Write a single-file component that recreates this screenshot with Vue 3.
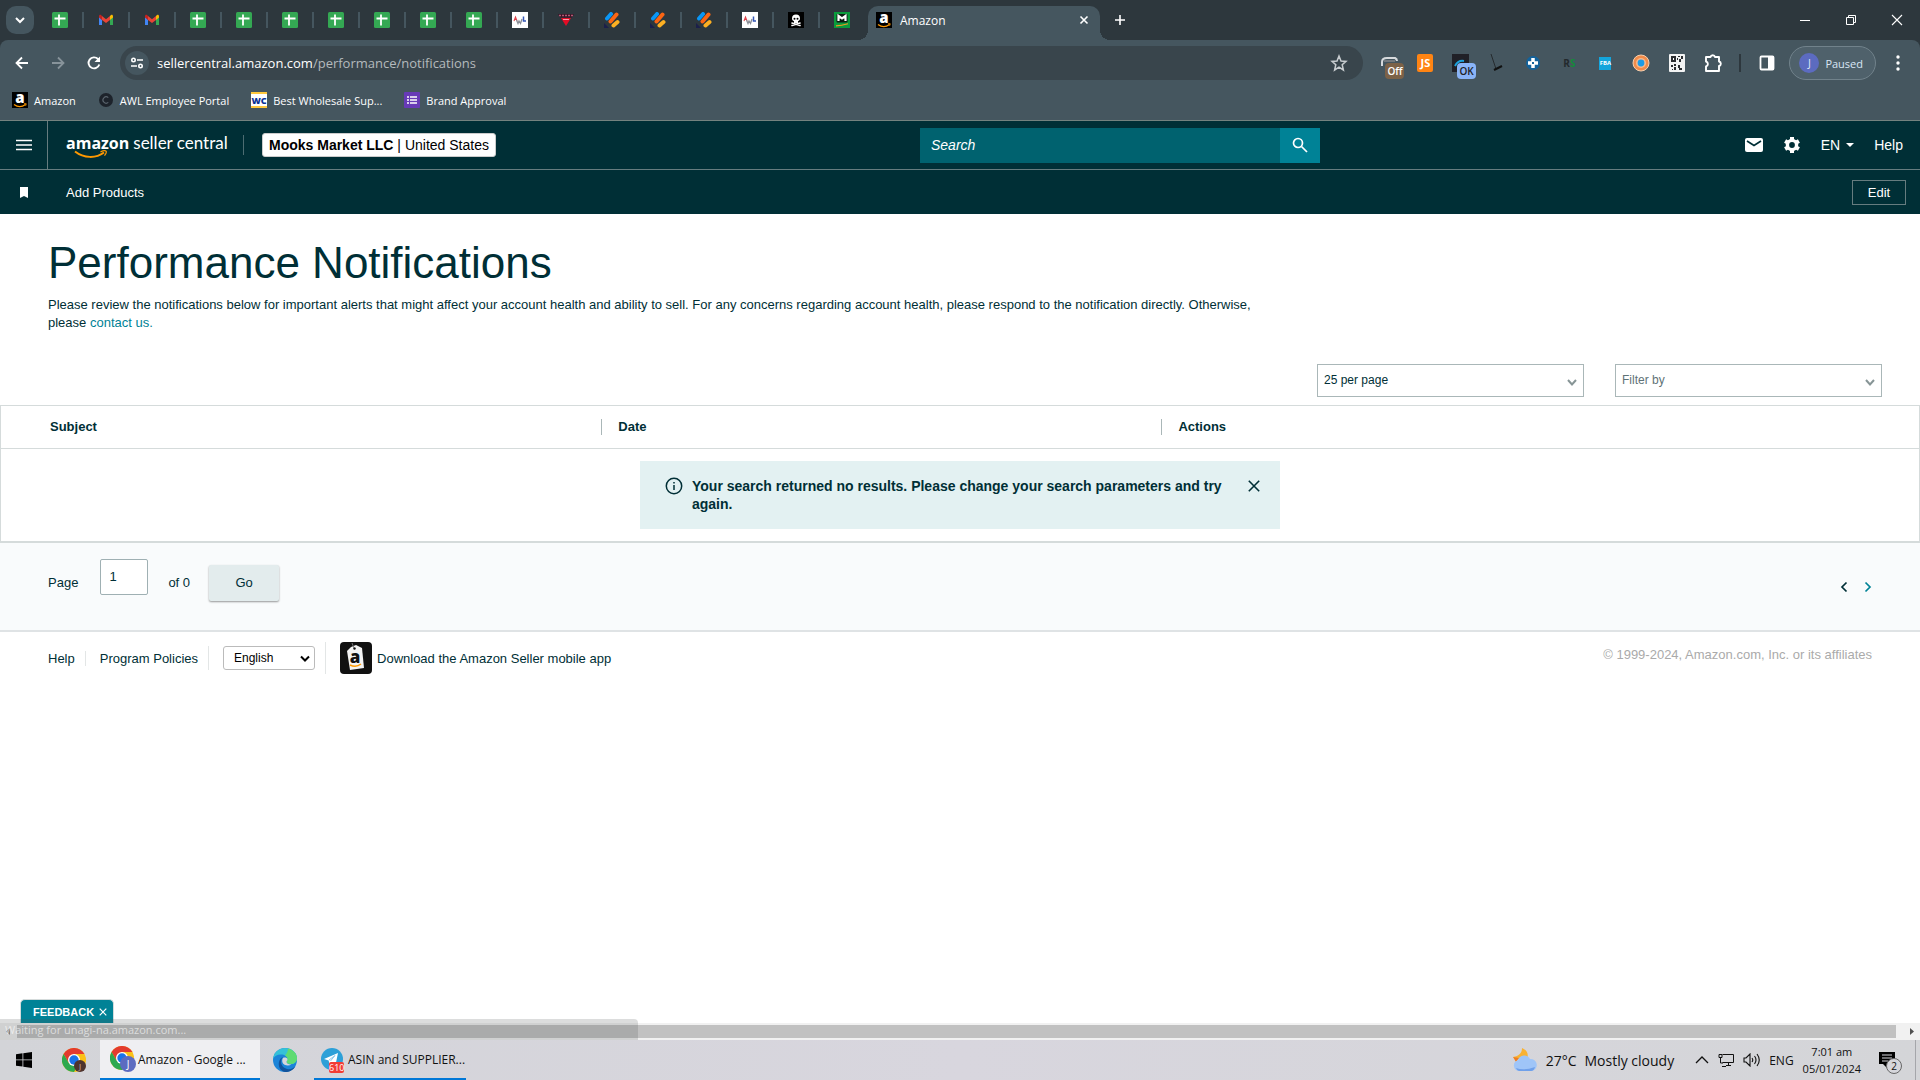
<template>
  <div class="screen">
    <!-- shared icon shapes -->
    <svg class="icon-defs" aria-hidden="true">
      <symbol id="i-sheet" viewBox="0 0 16 16">
        <rect width="16" height="16" rx="1.5" fill="#34a853" />
        <path d="M2.5 6.5h11M7 2.5v11" stroke="#fff" stroke-width="1.8" />
      </symbol>
      <symbol id="i-gmail" viewBox="0 0 16 16">
        <path d="M1 4.5V13h3V7.5z" fill="#4285f4" />
        <path d="M15 4.5V13h-3V7.5z" fill="#34a853" />
        <path d="M12 4l1-1c1-.7 2 0 2 1.200v1.300l-3 2.500z" fill="#fbbc04" />
        <path d="M4 4l4 3.200L12 4v4l-4 3-4-3z" fill="#ea4335" />
        <path d="M4 4L3 3C2 2.300 1 3 1 4.200v1.300L4 8z" fill="#c5221f" />
      </symbol>
      <symbol id="i-awl" viewBox="0 0 16 16">
        <rect width="16" height="16" fill="#fff" />
        <path d="M2 9l1.500-4L5 9M3 7.500h2" fill="none" stroke="#e0444c" stroke-width="1.100" />
        <path d="M4.500 8l1.500 3.500L7 9l1.500 2.500L10 7" fill="none" stroke="#8a8f98" stroke-width="1.300" />
        <path d="M11.500 4.500V9h2.500" fill="none" stroke="#3557b7" stroke-width="1.500" />
      </symbol>
      <symbol id="i-red" viewBox="0 0 16 16">
        <path d="M0 2h16l-2 3.500H2z" fill="#3b1426" />
        <path d="M1 3.500h14" stroke="#b05a73" stroke-width="1.300" stroke-dasharray="2 1" />
        <path d="M3 6h10l-5 8z" fill="#e30d26" />
        <path d="M5 7.500h6" stroke="#ff9cab" stroke-width="1" />
      </symbol>
      <symbol id="i-bars" viewBox="0 0 16 16">
        <path d="M0 11l5 5H0z" fill="#1b1f4b" />
        <g fill="none" stroke-linecap="round" stroke-width="4">
          <path d="M3 6.500L7 2" stroke="#0a96f5" />
          <path d="M6.500 9.500l6-7" stroke="#fb6514" />
          <path d="M9.500 13.500l4-3.500" stroke="#fdb022" />
        </g>
      </symbol>
      <symbol id="i-skull" viewBox="0 0 16 16">
        <rect width="16" height="16" fill="#000" />
        <path d="M4 11l8 2.500M12 11l-8 2.500" stroke="#fff" stroke-width="1.600" stroke-linecap="round" />
        <path d="M8 2.500a4 4 0 0 0-4 4c0 1.500.8 2.200 2 2.700V11h4V9.200c1.200-.5 2-1.200 2-2.700a4 4 0 0 0-4-4z" fill="#fff" />
        <circle cx="6.500" cy="6.800" r="1" /><circle cx="9.500" cy="6.800" r="1" />
      </symbol>
      <symbol id="i-m" viewBox="0 0 16 16">
        <rect width="16" height="16" fill="#0a9b3c" />
        <rect x="2.500" y="2" width="11" height="8.500" rx="1" fill="#0b1d12" />
        <path d="M4.500 9V4L8 6.500 11.500 4v5" fill="none" stroke="#fff" stroke-width="2.200" />
        <path d="M2 13.800c4 0 8-.8 12-2" fill="none" stroke="#f39a1f" stroke-width="1.200" />
      </symbol>
      <symbol id="i-amazon" viewBox="0 0 16 16">
        <rect width="16" height="16" fill="#000" />
        <text x="8" y="11" text-anchor="middle" font-family="Open Sans, sans-serif" font-weight="800" font-size="15" fill="#fff">a</text>
        <path d="M2 12.500c3.500 2.500 8 2.500 11.500 0" fill="none" stroke="#f90" stroke-width="1.300" />
        <path d="M12 11.800l2.200-.1-.5 2" fill="none" stroke="#f90" stroke-width=".9" />
      </symbol>
      <symbol id="i-portal" viewBox="0 0 16 16">
        <circle cx="8" cy="8" r="7" fill="#1d232b" />
        <path d="M10.300 5.600a3.200 3.200 0 1 0 0 4.800" fill="none" stroke="#5a646d" stroke-width="1.100" />
      </symbol>
      <symbol id="i-wc" viewBox="0 0 16 16">
        <rect width="16" height="16" fill="#fff" />
        <path d="M0 0h16v2H0zM0 14h16v2H0z" fill="#ffc83d" />
        <text x="8" y="11.500" text-anchor="middle" font-family="Open Sans, sans-serif" font-weight="800" font-size="9" fill="#0a3296">WC</text>
      </symbol>
      <symbol id="i-form" viewBox="0 0 16 16">
        <rect width="16" height="16" rx="1" fill="#673ab7" />
        <path d="M3 5h2M3 8h2M3 11h2M6 5h7M6 8h7M6 11h7" stroke="#fff" stroke-width="1.600" />
      </symbol>
      <symbol id="i-chrome" viewBox="0 0 24 24">
        <circle cx="12" cy="12" r="12" fill="#fbc116" />
        <path d="M1.600 6A12 12 0 0 1 22.400 6H12L6.800 15z" fill="#e33b2e" />
        <path d="M1.600 6A12 12 0 0 0 12 24l5.200-9H6.800z" fill="#2da94f" />
        <circle cx="12" cy="12" r="6" fill="#fff" />
        <circle cx="12" cy="12" r="4.700" fill="#1a73e8" />
      </symbol>
      <symbol id="i-chevron" viewBox="0 0 12 12">
        <path d="M2 4l4 4.500L10 4" fill="none" stroke="#879596" stroke-width="2" />
      </symbol>
    </svg>

    <!-- tab strip -->
    <div class="tab-strip">
      <button class="tab-search" aria-label="Search tabs">
        <svg width="12" height="12" viewBox="0 0 12 12"><path d="M2 4l4 4 4-4" fill="none" stroke="#fff" stroke-width="2" /></svg>
      </button>
      <div class="tabs">
        <button v-for="(tab, i) in tabs" :key="i" class="tab" :aria-label="'Tab ' + (i + 1)">
          <svg width="16" height="16"><use :href="'#i-' + tab" /></svg>
        </button>
      </div>
      <div class="tab-active">
        <svg width="16" height="16"><use href="#i-amazon" /></svg>
        <span class="tab-title">Amazon</span>
        <button class="plain" aria-label="Close tab">
          <svg width="10" height="10" viewBox="0 0 10 10"><path d="M1.500 1.500l7 7M8.500 1.500l-7 7" stroke="#fff" stroke-width="1.600" /></svg>
        </button>
      </div>
      <button class="plain new-tab" aria-label="New tab">
        <svg width="12" height="12" viewBox="0 0 12 12"><path d="M6 1v10M1 6h10" stroke="#fff" stroke-width="1.600" /></svg>
      </button>
      <div class="window-buttons">
        <button class="plain" aria-label="Minimize">
          <svg width="12" height="12" viewBox="0 0 12 12"><path d="M1 6.500h10" stroke="#fff" /></svg>
        </button>
        <button class="plain" aria-label="Restore">
          <svg width="12" height="12" viewBox="0 0 12 12"><path d="M1.500 3.500h7v7h-7zM3.500 3V1.500h7v7H9" fill="none" stroke="#fff" /></svg>
        </button>
        <button class="plain" aria-label="Close">
          <svg width="12" height="12" viewBox="0 0 12 12"><path d="M1 1l10 10M11 1L1 11" stroke="#fff" stroke-width="1.100" /></svg>
        </button>
      </div>
    </div>

    <div class="browser-bar">
      <div class="toolbar">
        <div class="nav-buttons">
          <button class="plain" aria-label="Back">
            <svg width="16" height="16" viewBox="0 0 16 16"><path d="M14 8H3M8 2.500L2.500 8 8 13.500" fill="none" stroke="#fff" stroke-width="1.800" /></svg>
          </button>
          <button class="plain" aria-label="Forward">
            <svg width="16" height="16" viewBox="0 0 16 16"><path d="M2 8h11M8 2.500L13.500 8 8 13.500" fill="none" stroke="#87939a" stroke-width="1.800" /></svg>
          </button>
          <button class="plain" aria-label="Reload">
            <svg width="16" height="16" viewBox="0 0 16 16"><path d="M13.300 9.500A5.500 5.500 0 1 1 12 4l1.500 1.600" fill="none" stroke="#fff" stroke-width="1.900" /><path d="M14 1.500v5.500H8.500z" fill="#fff" /></svg>
          </button>
        </div>
        <div class="omnibox">
          <span class="site-info">
            <svg width="14" height="14" viewBox="0 0 14 14" fill="none" stroke="#fff" stroke-width="1.600"><circle cx="3.500" cy="4" r="1.700" /><path d="M7 4h6M1 10h6" /><circle cx="10.500" cy="10" r="1.700" /></svg>
          </span>
          <span class="url"><b>sellercentral.amazon.com</b>/performance/notifications</span>
          <button class="plain" aria-label="Bookmark this tab">
            <svg width="18" height="18" viewBox="0 0 18 18"><path d="M9 2l2 5 5 .4-3.800 3.300L13.400 16 9 13.100 4.600 16l1.200-5.300L2 7.400 7 7z" fill="none" stroke="#c8cdd0" stroke-width="1.500" /></svg>
          </button>
        </div>
        <div class="extensions">
          <span class="ext">
            <svg width="18" height="18" viewBox="0 0 18 18"><path d="M2 12V8q0-4 5-4h8q2 1 2 3" fill="none" stroke="#d7dadd" stroke-width="2" /><path d="M4 7h11" stroke="#73797e" stroke-width="2" /></svg>
            <span class="ext-badge off">Off</span>
          </span>
          <span class="ext"><span class="js">JS</span></span>
          <span class="ext">
            <svg width="18" height="18" viewBox="0 0 18 18"><path d="M0 0h17v18H0z" fill="#202027" /><path d="M3 12q3-6 9-5" fill="none" stroke="#1ba2dc" stroke-width="2" /></svg>
            <span class="ext-badge ok">OK</span>
          </span>
          <span class="ext"><svg width="18" height="18" viewBox="0 0 18 18"><path d="M3 0l5 15" stroke="#252a2e" /><path d="M6 16l8-4" stroke="#111" stroke-width="2" /></svg></span>
          <span class="ext"><svg width="18" height="18" viewBox="0 0 18 18"><circle cx="9" cy="9" r="7" fill="#13629b" /><path d="M9 4v10M4 9h10" stroke="#fff" stroke-width="3.500" /><path d="M9 8v2" stroke="#13629b" stroke-width="2" /></svg></span>
          <span class="ext rs">R<i>S</i></span>
          <span class="ext"><span class="fba">FBA</span></span>
          <span class="ext"><svg width="18" height="18" viewBox="0 0 18 18"><circle cx="9" cy="9" r="8" fill="#f28c4a" stroke="#f6cfae" /><circle cx="9" cy="9" r="5" fill="#f7b98d" /><circle cx="9" cy="9" r="3.400" fill="#1d9be5" /></svg></span>
          <span class="ext">
            <svg width="16" height="18" viewBox="0 0 16 18"><rect width="16" height="18" rx="1" fill="#f2f3f3" /><path d="M2 2h5v6H2zM9 2h2v1H9zM12 2h2v3h-2zM2 11h2v2H2zM5 10h2v2H5zM5 13h2v3H5zM10 5h2v3h-2zM9 11h2v3h2v2h-3v-2H9zM3 15h1v1H3zM8 4h1v2H8z" fill="#2a2d30" /><path d="M4 4h1v2H4z" fill="#fff" /></svg>
          </span>
          <button class="plain ext" aria-label="Extensions">
            <svg width="18" height="20" viewBox="0 0 18 20"><path d="M2 4h4.500a2.300 2.300 0 0 1 4.500 0h4v4.500a2.300 2.300 0 0 1 0 4.500v5H2v-4.500a2.600 2.600 0 0 0 0-5z" fill="none" stroke="#fff" stroke-width="1.900" stroke-linejoin="round" /></svg>
          </button>
        </div>
        <button class="plain side-panel" aria-label="Side panel">
          <svg width="16" height="16" viewBox="0 0 16 16"><rect x="1.500" y="1.500" width="13" height="13" rx="1" fill="none" stroke="#fff" stroke-width="1.800" /><path d="M9 1h6v14H9z" fill="#fff" /></svg>
        </button>
        <button class="profile"><span>J</span>Paused</button>
        <button class="plain menu" aria-label="Menu">
          <svg width="4" height="16" viewBox="0 0 4 16" fill="#fff"><circle cx="2" cy="2" r="1.700" /><circle cx="2" cy="8" r="1.700" /><circle cx="2" cy="14" r="1.700" /></svg>
        </button>
      </div>
      <div class="bookmarks">
        <a v-for="b in bookmarks" :key="b.name" href="#">
          <svg width="16" height="16"><use :href="'#i-' + b.icon" /></svg>{{ b.name }}
        </a>
      </div>
    </div>

    <!-- page -->
    <div class="page">
      <header class="top-bar">
        <button class="plain burger" aria-label="Open menu">
          <svg width="16" height="12" viewBox="0 0 16 12"><path d="M0 1.500h16M0 6h16M0 10.500h16" stroke="#fff" stroke-width="1.600" /></svg>
        </button>
        <a href="#" class="logo">
          <b>amazon</b><span>seller central</span>
          <svg class="smile" width="34" height="10" viewBox="0 0 34 10"><path d="M1 1.500c9 7 21 7 29 1" fill="none" stroke="#f90" stroke-width="2" /><path d="M26.500 1.800c3-1.300 5-1.200 5.500-.6s-.2 2.800-1.500 4.400" fill="none" stroke="#f90" stroke-width="1.300" /></svg>
        </a>
        <button class="account"><b>Mooks Market LLC</b> | United States</button>
        <form class="search" @submit.prevent>
          <input v-model="query" type="search" placeholder="Search" aria-label="Search" />
          <button aria-label="Submit search">
            <svg width="18" height="18" viewBox="0 0 18 18" fill="none" stroke="#fff" stroke-width="1.700"><circle cx="7" cy="7" r="4.500" /><path d="M10.500 10.500l5.500 5.500" /></svg>
          </button>
        </form>
        <nav class="top-links">
          <a href="#" aria-label="Messages">
            <svg width="18" height="16" viewBox="0 0 18 16"><rect y="1" width="18" height="14" rx="2" fill="#fff" /><path d="M2 4l7 4.500L16 4" fill="none" stroke="#002f36" stroke-width="1.700" /></svg>
          </a>
          <a href="#" aria-label="Settings">
            <svg width="18" height="18" viewBox="0 0 18 18"><path d="M9 1v16M2.100 5l13.800 8M15.900 5L2.100 13" stroke="#fff" stroke-width="4" /><circle cx="9" cy="9" r="4.500" fill="none" stroke="#fff" stroke-width="3.500" /><circle cx="9" cy="9" r="2.900" fill="#002f36" /></svg>
          </a>
          <button class="plain lang">EN<svg width="8" height="4" viewBox="0 0 8 4"><path d="M0 0h8L4 4z" fill="#fff" /></svg></button>
          <a href="#">Help</a>
        </nav>
      </header>
      <div class="favorites">
        <svg class="flag" width="8" height="11" viewBox="0 0 8 11"><path d="M0 0h8v11L4 9l-4 2z" fill="#fff" /></svg>
        <a href="#">Add Products</a>
        <button class="edit">Edit</button>
      </div>

      <main>
        <section class="intro">
          <h1>Performance Notifications</h1>
          <p>Please review the notifications below for important alerts that might affect your account health and ability to sell. For any concerns regarding account health, please respond to the notification directly. Otherwise, please <a href="#">contact us.</a></p>
        </section>

        <div class="filters">
          <div class="select-box">
            <select v-model="perPage" aria-label="Results per page">
              <option value="25">25 per page</option>
              <option value="50">50 per page</option>
            </select>
            <svg width="12" height="12"><use href="#i-chevron" /></svg>
          </div>
          <div class="select-box muted">
            <select v-model="filterBy" aria-label="Filter by">
              <option value="">Filter by</option>
            </select>
            <svg width="12" height="12"><use href="#i-chevron" /></svg>
          </div>
        </div>

        <table>
          <thead>
            <tr>
              <th v-for="c in columns" :key="c"><span>{{ c }}</span></th>
            </tr>
          </thead>
          <tbody>
            <tr>
              <td colspan="3">
                <div v-if="showAlert" class="alert" role="status">
                  <svg width="18" height="18" viewBox="0 0 18 18"><circle cx="9" cy="9" r="7.700" fill="none" stroke="#002f36" stroke-width="1.500" /><path d="M9 8v5M9 5v1.500" stroke="#002f36" stroke-width="1.500" /></svg>
                  <p>Your search returned no results. Please change your search parameters and try again.</p>
                  <button class="plain" aria-label="Dismiss" @click="showAlert = false">
                    <svg width="12" height="12" viewBox="0 0 12 12"><path d="M.8.8l10.400 10.400M11.200.8L.8 11.200" stroke="#002f36" stroke-width="1.600" /></svg>
                  </button>
                </div>
              </td>
            </tr>
          </tbody>
        </table>

        <form class="pager" @submit.prevent>
          <label for="page-no">Page</label>
          <input id="page-no" v-model="pageNo" type="text" />
          <span class="total">of 0</span>
          <button class="go">Go</button>
          <div class="arrows">
            <button type="button" class="plain" aria-label="Previous page">
              <svg width="8" height="12" viewBox="0 0 8 12"><path d="M6.500 1.500L2 6l4.500 4.500" fill="none" stroke="#002f36" stroke-width="1.700" /></svg>
            </button>
            <button type="button" class="plain" aria-label="Next page">
              <svg width="8" height="12" viewBox="0 0 8 12"><path d="M1.500 1.500L6 6l-4.500 4.500" fill="none" stroke="#008296" stroke-width="1.700" /></svg>
            </button>
          </div>
        </form>
      </main>

      <footer>
        <a href="#">Help</a>
        <a href="#">Program Policies</a>
        <span class="lang-cell">
          <select v-model="language" aria-label="Language"><option>English</option></select>
          <svg width="10" height="8" viewBox="0 0 10 8"><path d="M1 1.500l4 4 4-4" fill="none" stroke="#000" stroke-width="2" /></svg>
        </span>
        <a href="#" class="app-link">
          <svg width="32" height="32" viewBox="0 0 32 32">
            <rect width="32" height="32" rx="4" fill="#111" />
            <path d="M11 5l5-2 6 3 2 20-14 2-3-19z" fill="#f4f4f4" />
            <circle cx="14.500" cy="6.500" r="1.200" fill="#111" />
            <path d="M14 6l-2-5" stroke="#777" />
            <text x="15" y="21" text-anchor="middle" font-family="Open Sans, sans-serif" font-weight="800" font-size="17" fill="#111">a</text>
            <path d="M10 23q6 3 11-1" fill="none" stroke="#f90" stroke-width="1.500" />
          </svg>
          Download the Amazon Seller mobile app
        </a>
        <span class="copyright">© 1999-2024, Amazon.com, Inc. or its affiliates</span>
      </footer>

      <button class="feedback">FEEDBACK
        <svg width="8" height="8" viewBox="0 0 8 8"><path d="M.7.7l6.600 6.600M7.300.7L.7 7.300" stroke="#fff" stroke-width="1.200" /></svg>
      </button>
      <div class="status">Waiting for unagi-na.amazon.com...</div>
    </div>
    <div class="scrollbar">
      <svg width="17" height="17" viewBox="0 0 17 17"><path d="M10 5v7L6 8.500z" fill="#8b8b8b" /></svg>
      <div class="thumb"></div>
      <svg width="17" height="17" viewBox="0 0 17 17"><path d="M7 5v7l4-3.500z" fill="#505050" /></svg>
    </div>

    <!-- taskbar -->
    <div class="taskbar">
      <button class="plain start" aria-label="Start">
        <svg width="16" height="16" viewBox="0 0 16 16"><path d="M0 2.200l6.500-.9v6.200H0zM7.300 1.200L16 0v7.500H7.300zM0 8.300h6.500v6.300L0 13.700zM7.300 8.300H16V16l-8.700-1.200z" /></svg>
      </button>
      <button class="plain app-icon" aria-label="Google Chrome">
        <svg width="24" height="24" viewBox="0 0 24 24"><use href="#i-chrome" width="24" height="24" /><circle cx="18" cy="18" r="6" fill="#4e342e" /><text x="18" y="21" text-anchor="middle" font-family="Open Sans, sans-serif" font-size="8" fill="#d3b8ae">J</text></svg>
      </button>
      <button class="task current">
        <svg width="26" height="26" viewBox="0 0 26 26"><use href="#i-chrome" width="24" height="24" /><circle cx="18" cy="18" r="8" fill="#5c6bc0" /><text x="18" y="22" text-anchor="middle" font-family="Open Sans, sans-serif" font-size="10" fill="#fff">J</text></svg>
        Amazon - Google ...
      </button>
      <button class="plain app-icon edge" aria-label="Microsoft Edge">
        <svg width="24" height="24" viewBox="0 0 24 24">
          <circle cx="12" cy="12" r="12" fill="#1b84d8" />
          <path d="M0 11C1 4 6 0 12 0c7 0 12 5 12 10 0 4-3 6-6 6-3 0-4.500-1-4.500-2s1-1.500 1-3c0-2.500-3-4.500-6.500-4.500-4 0-7 2-8 4.500z" fill="#35c1d8" />
          <path d="M15 .500c5.500 1.300 9 5.300 9 9.500 0 4-3 6-6 6-3 0-4.500-1-4.500-2s1-1.500 1-3c0-1.500-.9-2.900-2.500-3.600C14 5 15 3 15 .500z" fill="#5fdb72" />
          <path d="M10 9c-3 3-3 10 4 12 3.500.8 6.500-.5 8.500-3-2 4-6 6-10.500 6C7 23 5 18 6 14c.6-2.500 2-4.200 4-5z" fill="#12539c" />
          <path d="M10 10c1.500-1 4.500-.5 4.500 1.500 0 1.200-1 1.500-1 2.500s1.500 2.500 5 2.500c-3 2-8 1-9-2-.5-1.500-.3-3.500.5-4.500z" fill="#d6d5dc" />
        </svg>
      </button>
      <button class="task telegram">
        <span class="tg">
          <svg width="24" height="24" viewBox="0 0 24 24"><circle cx="12" cy="12" r="11" fill="#2da0d8" /><path d="M4 12L18 6l-2.500 12-4.200-3-2 2-.6-3.600z" fill="#fff" /><path d="M9 13l6-4.500-4.500 5.500" fill="none" stroke="#8fc9ea" /></svg>
          <i>610</i>
        </span>
        ASIN and SUPPLIER...
      </button>
      <div class="tray">
        <span class="weather">
          <svg width="26" height="26" viewBox="0 0 26 26">
            <path d="M10 1c5 2 7 6 5 11H6c-2 0-4-1-5-2 6-1 9-4 9-9z" fill="#f9b233" />
            <path d="M1 10l6 1-3 4z" fill="#ef7d22" />
            <path d="M7 24a5.500 5.500 0 0 1-1-10.800 6.500 6.500 0 0 1 12-1.200 6 6 0 0 1 1.500 12z" fill="#9fc5f8" />
            <path d="M4 21q8 3 19-1-1 4-4 4H7q-2 0-3-3z" fill="#6fa0ea" />
          </svg>
          <span>27°C</span><span>Mostly cloudy</span>
        </span>
        <svg width="14" height="8" viewBox="0 0 14 8"><path d="M1 7l6-6 6 6" fill="none" stroke="#111" stroke-width="1.300" /></svg>
        <svg width="16" height="14" viewBox="0 0 16 14" fill="none" stroke="#111"><path d="M4.500 1.500h11v8h-11M8 12.500h5M10.500 10v3M1 1.500h3v3H1zM2.500 5v5H5M4 13.500h4" /></svg>
        <svg width="17" height="14" viewBox="0 0 17 14" fill="none" stroke="#111" stroke-width="1.100"><path d="M1 5h2l4-4v12L3 9H1zM9 5q1.500 2 0 4M11.500 3q3 4 0 8M14 1q4.500 6 0 12" /></svg>
        <span>ENG</span>
        <span class="clock">7:01 am<br />05/01/2024</span>
        <span class="notice">
          <svg width="16" height="16" viewBox="0 0 16 16"><path d="M0 0h16v12H8v4l-4-4H0z" /><path d="M3 3h10M3 6h10M3 9h6" stroke="#d6d6db" /></svg>
          <i>2</i>
        </span>
      </div>
    </div>
  </div>
</template>

<script setup>
import { ref } from 'vue';

const tabs = [
  'sheet', 'gmail', 'gmail',
  'sheet', 'sheet', 'sheet', 'sheet', 'sheet', 'sheet', 'sheet',
  'awl', 'red', 'bars', 'bars', 'bars', 'awl', 'skull', 'm'
];

const bookmarks = [
  { name: 'Amazon', icon: 'amazon' },
  { name: 'AWL Employee Portal', icon: 'portal' },
  { name: 'Best Wholesale Sup...', icon: 'wc' },
  { name: 'Brand Approval', icon: 'form' }
];

const columns = ['Subject', 'Date', 'Actions'];

const query = ref('');
const perPage = ref('25');
const filterBy = ref('');
const pageNo = ref('1');
const language = ref('English');
const showAlert = ref(true);
</script>

<style>
body {
  margin: 0;
}
</style>

<style scoped>
* {
  box-sizing: border-box;
}

.screen {
  display: flex;
  flex-direction: column;
  min-height: 100vh;
  background: #fff;
  font-family: "Open Sans", "Noto Sans", sans-serif;
  font-size: 12px;
  color: #fff;
}

svg {
  display: block;
  flex: none;
}

.icon-defs {
  display: none;
}

button, input, select {
  font-family: inherit;
  font-size: inherit;
  color: inherit;
  margin: 0;
}

a {
  color: inherit;
  text-decoration: none;
}

.plain {
  display: flex;
  align-items: center;
  justify-content: center;
  padding: 0;
  border: 0;
  background: none;
}

/* tabs */
.tab-strip {
  display: flex;
  align-items: center;
  height: 40px;
  padding-left: 6px;
  background: #2d373d;
}

.tab-search {
  display: flex;
  align-items: center;
  justify-content: center;
  width: 28px;
  height: 28px;
  padding: 0;
  border: 0;
  border-radius: 10px;
  background: #45565f;
}

.tabs {
  display: flex;
  margin: 0 2px 0 4px;
}

.tab {
  display: flex;
  justify-content: center;
  width: 46px;
  padding: 0;
  border: 0;
  border-right: 2px solid #45565f;
  background: none;
}

.tab:last-child {
  border-right-color: transparent;
}

.tab-active {
  position: relative;
  display: flex;
  align-items: center;
  align-self: flex-end;
  width: 232px;
  height: 34px;
  padding: 0 11px 6px 8px;
  border-radius: 10px 10px 0 0;
  background: #45565f;
}

.tab-active::before,
.tab-active::after {
  content: "";
  position: absolute;
  bottom: 0;
  width: 10px;
  height: 10px;
}

.tab-active::before {
  right: 100%;
  background: radial-gradient(circle at 0 0, transparent 10px, #45565f 10px);
}

.tab-active::after {
  left: 100%;
  background: radial-gradient(circle at 100% 0, transparent 10px, #45565f 10px);
}

.tab-title {
  flex: 1;
  margin-left: 8px;
}

.new-tab {
  width: 28px;
  height: 28px;
  margin-left: 6px;
}

.window-buttons {
  display: flex;
  margin-left: auto;
}

.window-buttons button {
  width: 46px;
  height: 40px;
}

/* toolbar */
.browser-bar {
  border-bottom: 1px solid #74827f;
  background: linear-gradient(#2d373d, #2d373d) top / 100% 10px no-repeat, #45565f;
}

.toolbar {
  display: flex;
  align-items: center;
  height: 46px;
  padding: 6px 20px 6px 14px;
  border-radius: 8px 8px 0 0;
  background: #45565f;
}

.nav-buttons {
  display: flex;
  gap: 20px;
  margin-right: 18px;
}

.omnibox {
  display: flex;
  flex: 1;
  align-items: center;
  height: 34px;
  padding: 0 15px 0 5px;
  border-radius: 17px;
  background: #39454c;
}

.site-info {
  display: flex;
  align-items: center;
  justify-content: center;
  width: 24px;
  height: 24px;
  border-radius: 12px;
  background: #45565f;
}

.url {
  flex: 1;
  margin-left: 8px;
  font-size: 13px;
  color: #b4babd;
}

.url b {
  font-weight: 400;
  color: #fff;
}

.extensions {
  display: flex;
  gap: 18px;
  padding: 0 17px;
}

.ext {
  position: relative;
  display: flex;
  align-items: center;
  justify-content: center;
  width: 18px;
  height: 20px;
}

.ext-badge {
  position: absolute;
  left: 5px;
  top: 10px;
  padding: 0 2px;
  border-radius: 4px;
  font-size: 10px;
  font-weight: 600;
  line-height: 16px;
}

.off {
  background: #7c6248;
}

.ok {
  background: #8ab4f8;
  color: #202124;
}

.js {
  width: 16px;
  border-radius: 2px;
  background: #ff8413;
  font-size: 11px;
  font-weight: 700;
  line-height: 18px;
  text-align: center;
}

.rs {
  font-size: 10px;
  font-weight: 700;
  color: #23292d;
}

.rs i {
  font-style: normal;
  color: #148a3a;
}

.fba {
  width: 12px;
  background: #14a5dc;
  font-size: 6px;
  font-weight: 700;
  line-height: 13px;
  text-align: center;
}

.side-panel {
  padding-left: 18px;
  height: 18px;
  border-left: 2px solid #2d373d;
}

.profile {
  display: flex;
  align-items: center;
  gap: 6px;
  height: 34px;
  margin: 0 20px 0 14px;
  padding: 0 12px 0 9px;
  border: 1px solid #71828b;
  border-radius: 17px;
  background: #4f616b;
  font-size: 11px;
  color: #d9e6f5;
}

.profile span {
  width: 20px;
  border-radius: 10px;
  background: #5c6bc0;
  line-height: 20px;
  text-align: center;
}

.bookmarks {
  display: flex;
  align-items: center;
  gap: 22px;
  height: 34px;
  padding: 0 12px 6px;
  font-size: 11px;
}

.bookmarks a {
  display: flex;
  align-items: center;
  gap: 6px;
}

/* seller central header */
.page {
  position: relative;
  display: flex;
  flex: 1;
  flex-direction: column;
  font-family: "Liberation Sans", Arial, sans-serif;
  font-size: 13px;
  color: #002f36;
}

.top-bar {
  display: flex;
  align-items: center;
  height: 49px;
  border-bottom: 1px solid #667c7f;
  background: #002f36;
  color: #fff;
  font-size: 14px;
}

.burger {
  width: 48px;
  height: 48px;
  border-right: 1px solid #667c7f;
}

.logo {
  position: relative;
  display: flex;
  gap: 4px;
  width: 178px;
  height: 20px;
  margin-left: 18px;
  border-right: 1px solid #4d6d72;
  font-family: "Open Sans", sans-serif;
  font-size: 16px;
  line-height: 16px;
  white-space: nowrap;
}

.logo span {
  font-family: Lato, sans-serif;
  font-size: 17px;
}

.smile {
  position: absolute;
  left: 8px;
  top: 15px;
}

.account {
  height: 24px;
  margin-left: 18px;
  padding: 0 6px;
  border: 1px solid #ccc;
  border-radius: 3px;
  background: #fff;
  color: #000;
}

.search {
  display: flex;
  width: 400px;
  height: 35px;
  margin-left: auto;
}

.search input {
  flex: 1;
  min-width: 0;
  padding: 0 11px;
  border: 0;
  background: #00626f;
}

.search input::placeholder {
  font-style: italic;
  color: #fff;
  opacity: 1;
}

.search button {
  display: flex;
  align-items: center;
  justify-content: center;
  width: 40px;
  border: 0;
  background: #008296;
}

.top-links {
  display: flex;
  flex: 0 0 600px;
  align-items: center;
  justify-content: flex-end;
  gap: 20px;
  padding-right: 17px;
}

.lang {
  gap: 6px;
}

.favorites {
  display: flex;
  align-items: center;
  height: 44px;
  padding: 0 14px 0 20px;
  background: #002f36;
  color: #fff;
}

.favorites a {
  margin-left: 38px;
}

.edit {
  width: 54px;
  height: 25px;
  margin-left: auto;
  padding: 0;
  border: 1px solid #667c7f;
  background: none;
}

/* content */
.intro {
  max-width: 1330px;
  padding: 22px 48px 0;
}

h1 {
  margin: 0;
  font-size: 44px;
  font-weight: 400;
  line-height: 54px;
}

.intro p {
  max-width: 1220px;
  margin: 6px 0 0;
  line-height: 18px;
}

.intro a {
  color: #008296;
}

.filters {
  display: flex;
  justify-content: flex-end;
  gap: 31px;
  padding: 32px 38px 8px;
}

.select-box {
  position: relative;
  width: 267px;
}

.select-box select {
  width: 100%;
  height: 33px;
  padding: 0 6px 2px;
  border: 1px solid #aab7b8;
  border-radius: 0;
  background: #fff;
  font-size: 12px;
  appearance: none;
}

.select-box.muted select {
  color: #5f7377;
}

.select-box svg {
  position: absolute;
  right: 6px;
  top: 12px;
  pointer-events: none;
}

table {
  width: 100%;
  border: 1px solid #d5dbdb;
  border-spacing: 0;
  table-layout: fixed;
}

th {
  height: 43px;
  padding: 0 0 1px;
  border-bottom: 1px solid #d5dbdb;
  text-align: left;
}

th span {
  display: block;
  padding-left: 16px;
  border-left: 1px solid #aab7b8;
  line-height: 16px;
}

th:first-child {
  width: 31.3%;
}

th:first-child span {
  padding-left: 48px;
  border-left-color: transparent;
}

th:nth-child(2) {
  width: 29.2%;
}

td {
  padding: 12px 0;
}

.alert {
  display: flex;
  align-items: flex-start;
  max-width: 640px;
  margin: 0 auto;
  padding: 16px 20px 16px 25px;
  background: #e3f1f2;
}

.alert p {
  flex: 1;
  margin: 0 8px 0 9px;
  font-size: 14px;
  font-weight: 700;
  line-height: 18px;
}

.alert button {
  height: 18px;
}

.pager {
  display: flex;
  align-items: center;
  height: 90px;
  padding: 0 48px 8px;
  border-top: 1px solid #d5dbdb;
  border-bottom: 2px solid #dfe3e5;
  background: #f9fbfc;
}

.pager input {
  width: 48px;
  height: 36px;
  margin: 0 20px 12px 22px;
  padding: 0 8px;
  border: 1px solid #9fb0b3;
  border-radius: 2px;
  background: #fff;
}

.go {
  width: 70px;
  height: 36px;
  margin-left: 19px;
  padding: 0;
  border: 0;
  border-radius: 2px;
  background: #e3eced;
  box-shadow: 0 1px 2px rgba(0, 0, 0, 0.4);
}

.arrows {
  display: flex;
  gap: 16px;
  margin-left: auto;
  padding-top: 8px;
}

footer {
  display: flex;
  align-items: center;
  padding: 10px 48px;
}

footer > * + *:not(.copyright) {
  margin-left: 10px;
  padding-left: 14px;
  border-left: 1px solid #e3e6e6;
}

.lang-cell {
  position: relative;
}

.lang-cell select {
  display: block;
  width: 92px;
  height: 24px;
  padding: 0 10px;
  border: 1px solid #bbb;
  border-radius: 3px;
  background: #fff;
  color: #000;
  font-size: 12px;
  appearance: none;
}

.lang-cell svg {
  position: absolute;
  right: 5px;
  top: 9px;
  pointer-events: none;
}

.app-link {
  display: flex;
  align-items: center;
  gap: 5px;
}

.copyright {
  align-self: flex-start;
  margin-left: auto;
  line-height: 26px;
  color: #aaa;
}

.feedback {
  position: absolute;
  left: 20px;
  bottom: 0;
  display: flex;
  align-items: center;
  gap: 5px;
  height: 24px;
  padding: 0 6px 0 12px;
  border: 1px solid #d5dbdb;
  border-bottom: 0;
  border-radius: 5px 5px 0 0;
  background: #008296;
  color: #fff;
  font-size: 11px;
  font-weight: 700;
}

.status {
  position: absolute;
  left: 0;
  bottom: -17px;
  z-index: 1;
  width: 638px;
  height: 21px;
  padding-left: 5px;
  border-radius: 0 4px 0 0;
  background: rgba(80, 84, 86, 0.2);
  font-family: "Open Sans", sans-serif;
  font-size: 11px;
  line-height: 21px;
  color: rgba(255, 255, 255, 0.6);
}

.scrollbar {
  display: flex;
  align-items: center;
  height: 17px;
  background: #f1f1f1;
}

.thumb {
  flex: 1;
  height: 13px;
  margin-right: 7px;
  background: #c1c1c1;
}

/* taskbar */
.taskbar {
  display: flex;
  align-items: center;
  height: 40px;
  background: linear-gradient(90deg, #d3d4d8, #d8d6de 50%, #d4d5d8);
  color: #111;
}

.start {
  width: 48px;
}

.app-icon {
  width: 52px;
}

.edge {
  width: 50px;
}

.task {
  display: flex;
  align-items: center;
  gap: 2px;
  width: 160px;
  height: 40px;
  padding: 0 0 0 10px;
  border: 0;
  border-bottom: 2px solid #0078d7;
  background: none;
  white-space: nowrap;
}

.task.current {
  background: #efeff2;
}

.task.telegram {
  gap: 4px;
  width: 152px;
  margin-left: 4px;
  padding-left: 6px;
}

.tg {
  position: relative;
}

.tg i {
  position: absolute;
  left: 9px;
  top: 15px;
  border-radius: 2px;
  background: #f23c34;
  color: #fff;
  font-size: 9px;
  font-style: normal;
  line-height: 11px;
}

.tray {
  display: flex;
  align-items: center;
  gap: 9px;
  height: 40px;
  margin-left: auto;
  margin-right: 4px;
  padding-right: 12px;
  border-right: 1px solid #a5a6aa;
}

.weather {
  display: flex;
  align-items: center;
  gap: 8px;
  margin-right: 12px;
  font-size: 14px;
}

.clock {
  font-size: 11px;
  line-height: 17px;
  text-align: center;
}

.notice {
  position: relative;
  margin: 0 8px 0 9px;
}

.notice i {
  position: absolute;
  left: 7px;
  top: 6px;
  width: 16px;
  border: 1px solid #666;
  border-radius: 8px;
  background: #d6d6db;
  font-size: 10px;
  font-style: normal;
  line-height: 14px;
  text-align: center;
}
</style>
